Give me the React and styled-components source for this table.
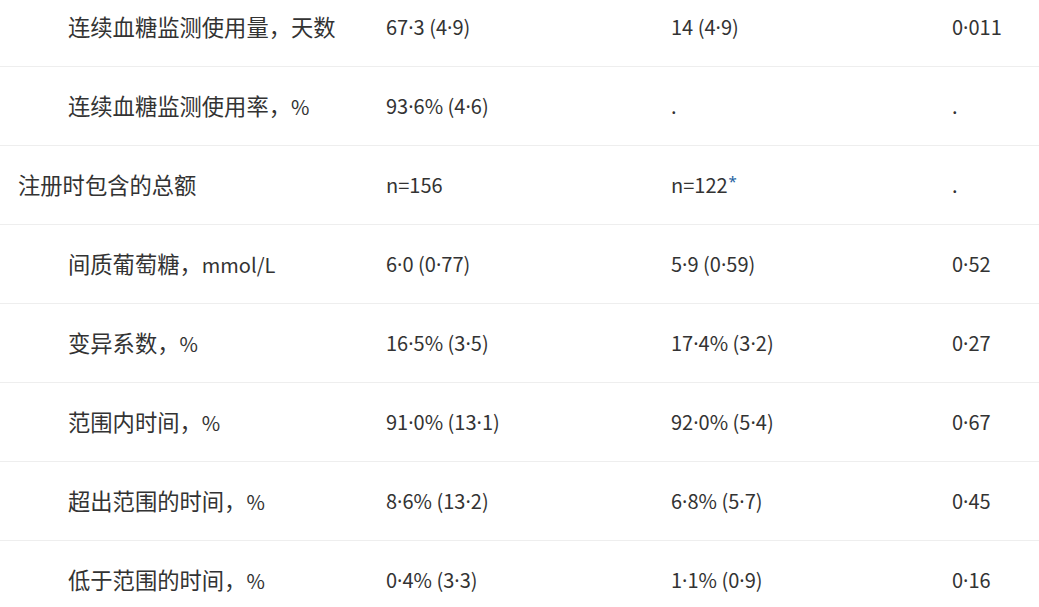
import React from 'react'
import styled, { createGlobalStyle } from 'styled-components'

const Global = createGlobalStyle`
  html, body {
    margin: 0;
    padding: 0;
    background: #ffffff;
    overflow: hidden;
  }
`

const Table = styled.div`
  margin-top: -12px;
  width: 1039px;
  font-family: "Noto Sans CJK SC", "Noto Sans", sans-serif;
  font-size: 20px;
  color: #333333;
`

const Row = styled.div`
  display: grid;
  grid-template-columns: 368px 285px 281px 1fr;
  height: 79px;
  align-items: center;
  border-bottom: 1px solid #eeeeee;
  box-sizing: border-box;
`

const Cell = styled.div`
  padding-left: 18px;
  white-space: nowrap;
  line-height: 30px;
`

const Label = styled(Cell)`
  padding-left: ${p => (p.$indent ? '68px' : '18px')};
`

const Han = styled.span`
  font-size: 22.3px;
`

const Dot = styled.span`
  font-family: "Noto Sans", sans-serif;
`

const Star = styled.span`
  font-family: "Noto Sans", sans-serif;
  color: #1d5f9f;
  font-size: 15px;
  vertical-align: top;
  line-height: 22px;
  margin-left: 1px;
`

const Num = ({ value }) => {
  const parts = value.split('·')
  return parts.map((p, i) => (
    <React.Fragment key={i}>
      {i > 0 && <Dot>·</Dot>}
      {p}
    </React.Fragment>
  ))
}

const rows = [
  { han: '连续血糖监测使用量，天数', unit: '', a: '67·3 (4·9)', b: '14 (4·9)', p: '0·011', indent: true },
  { han: '连续血糖监测使用率，', unit: '%', a: '93·6% (4·6)', b: '.', p: '.', indent: true },
  { han: '注册时包含的总额', unit: '', a: 'n=156', b: 'n=122', star: true, p: '.', indent: false },
  { han: '间质葡萄糖，', unit: 'mmol/L', a: '6·0 (0·77)', b: '5·9 (0·59)', p: '0·52', indent: true },
  { han: '变异系数，', unit: '%', a: '16·5% (3·5)', b: '17·4% (3·2)', p: '0·27', indent: true },
  { han: '范围内时间，', unit: '%', a: '91·0% (13·1)', b: '92·0% (5·4)', p: '0·67', indent: true },
  { han: '超出范围的时间，', unit: '%', a: '8·6% (13·2)', b: '6·8% (5·7)', p: '0·45', indent: true },
  { han: '低于范围的时间，', unit: '%', a: '0·4% (3·3)', b: '1·1% (0·9)', p: '0·16', indent: true },
]

const App = () => {
  return (
    <>
      <Global />
      <Table>
        {rows.map((r, i) => (
          <Row key={i}>
            <Label $indent={r.indent}><Han>{r.han}</Han>{r.unit}</Label>
            <Cell><Num value={r.a} /></Cell>
            <Cell><Num value={r.b} />{r.star && <Star>*</Star>}</Cell>
            <Cell><Num value={r.p} /></Cell>
          </Row>
        ))}
      </Table>
    </>
  )
}

export default App
